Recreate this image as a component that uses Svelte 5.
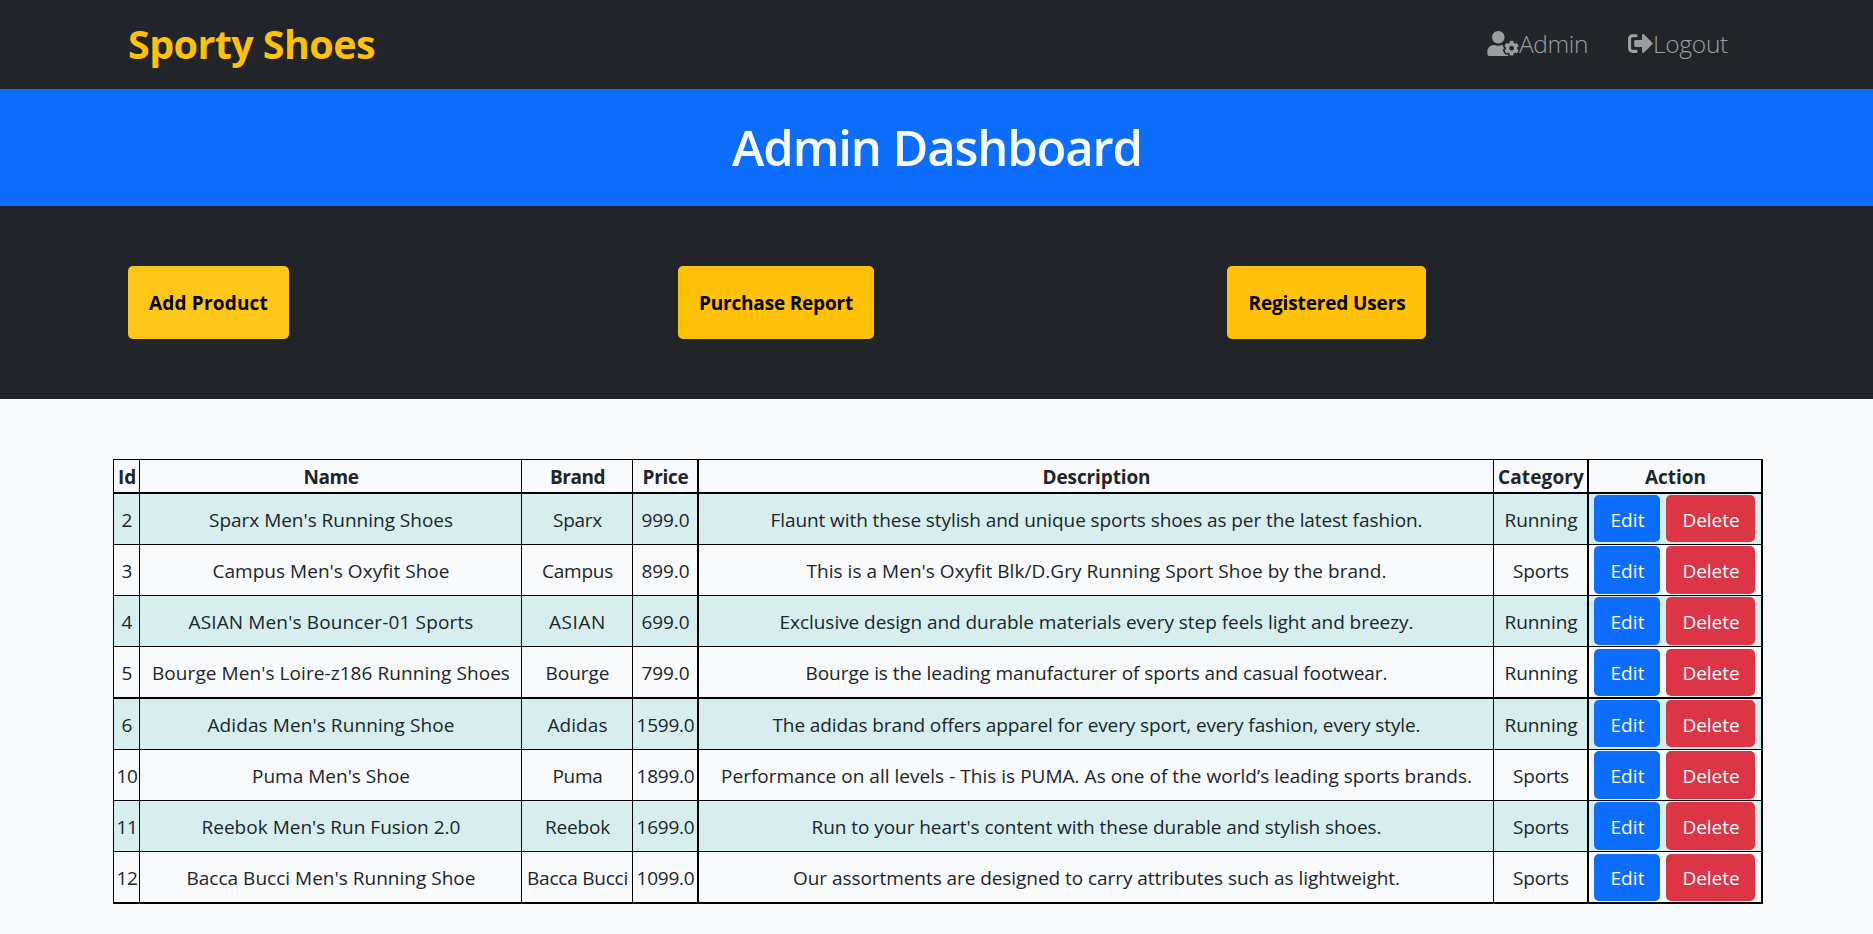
<script>
  const columns = [
    { label: 'Id', w: 18 },
    { label: 'Name', w: 55 },
    { label: 'Brand', w: 55 },
    { label: 'Price', w: 46 },
    { label: 'Description', w: 108 },
    { label: 'Category', w: 86 },
    { label: 'Action', w: 61 }
  ];

  // Each text cell is a pair: the text and the width it is set to.
  const products = [
    [['2', 11], ["Sparx Men's Running Shoes", 244], ['Sparx', 49], ['999.0', 48], ['Flaunt with these stylish and unique sports shoes as per the latest fashion.', 652], ['Running', 73]],
    [['3', 11], ["Campus Men's Oxyfit Shoe", 237], ['Campus', 71], ['899.0', 48], ["This is a Men's Oxyfit Blk/D.Gry Running Sport Shoe by the brand.", 580], ['Sports', 56]],
    [['4', 11], ["ASIAN Men's Bouncer-01 Sports", 285], ['ASIAN', 57], ['699.0', 48], ['Exclusive design and durable materials every step feels light and breezy.', 634], ['Running', 73]],
    [['5', 11], ["Bourge Men's Loire-z186 Running Shoes", 358], ['Bourge', 64], ['799.0', 48], ['Bourge is the leading manufacturer of sports and casual footwear.', 582], ['Running', 73]],
    [['6', 11], ["Adidas Men's Running Shoe", 247], ['Adidas', 60], ['1599.0', 58], ['The adidas brand offers apparel for every sport, every fashion, every style.', 648], ['Running', 73]],
    [['10', 21], ["Puma Men's Shoe", 158], ['Puma', 50], ['1899.0', 58], ['Performance on all levels - This is PUMA. As one of the world’s leading sports brands.', 751], ['Sports', 56]],
    [['11', 21], ["Reebok Men's Run Fusion 2.0", 259], ['Reebok', 65], ['1699.0', 58], ["Run to your heart's content with these durable and stylish shoes.", 570], ['Sports', 56]],
    [['12', 21], ["Bacca Bucci Men's Running Shoe", 289], ['Bacca Bucci', 101], ['1099.0', 58], ['Our assortments are designed to carry attributes such as lightweight.', 607], ['Sports', 56]]
  ];

  // Tracks a label so that it takes up the given width.
  function fit(node, width) {
    const natural = node.getBoundingClientRect().width;
    node.style.letterSpacing = (width - natural) / node.textContent.length + 'px';
  }
</script>

<nav>
  <a class="brand" href="#home"><span use:fit={247}>Sporty Shoes</span></a>
  <div class="links">
    <a href="#admin">
      <svg class="user" viewBox="0 0 640 512"><path d="M610.5 373.3c2.6-14.1 2.6-28.5 0-42.6l25.8-14.9c3-1.7 4.3-5.2 3.3-8.5-6.7-21.6-18.2-41.2-33.2-57.4-2.3-2.5-6-3.1-9-1.4l-25.8 14.9c-10.9-9.3-23.4-16.5-36.9-21.3v-29.8c0-3.4-2.4-6.4-5.7-7.1-22.3-5-45-4.8-66.2 0-3.3.7-5.7 3.7-5.7 7.1v29.8c-13.5 4.8-26 12-36.9 21.3l-25.8-14.9c-2.9-1.7-6.7-1.1-9 1.4-15 16.2-26.5 35.8-33.2 57.4-1 3.3.4 6.8 3.3 8.5l25.8 14.9c-2.6 14.1-2.6 28.5 0 42.6l-25.8 14.9c-3 1.7-4.3 5.2-3.3 8.5 6.7 21.6 18.2 41.1 33.2 57.4 2.3 2.5 6 3.1 9 1.4l25.8-14.9c10.9 9.3 23.4 16.5 36.9 21.3v29.8c0 3.4 2.4 6.4 5.7 7.1 22.3 5 45 4.8 66.2 0 3.3-.7 5.7-3.7 5.7-7.1v-29.8c13.5-4.8 26-12 36.9-21.3l25.8 14.9c2.9 1.7 6.7 1.1 9-1.4 15-16.2 26.5-35.8 33.2-57.4 1-3.3-.4-6.8-3.3-8.5l-25.8-14.9zM496 400.5c-26.8 0-48.5-21.8-48.5-48.5s21.8-48.5 48.5-48.5 48.5 21.8 48.5 48.5-21.7 48.5-48.5 48.5zM224 256c70.7 0 128-57.3 128-128S294.7 0 224 0 96 57.3 96 128s57.3 128 128 128zm201.2 226.5c-2.3-1.2-4.6-2.6-6.8-3.9l-7.9 4.6c-6 3.4-12.8 5.3-19.6 5.3-10.9 0-21.4-4.6-28.9-12.6-18.3-19.8-32.3-43.9-40.2-69.6-5.5-17.7 1.9-36.4 17.9-45.7l7.9-4.6c-.1-2.6-.1-5.2 0-7.8l-7.9-4.6c-16-9.2-23.4-28-17.9-45.7.9-2.9 2.2-5.8 3.2-8.7-3.8-.3-7.5-1.2-11.4-1.2h-16.7c-22.2 10.2-46.9 16-72.9 16s-50.6-5.8-72.9-16h-16.7C60.2 288 0 348.2 0 422.4V464c0 26.5 21.5 48 48 48h352c10.1 0 19.5-3.2 27.2-8.5-1.2-3.8-2-7.7-2-11.8v-9.2z" /></svg><span use:fit={69}>Admin</span>
    </a>
    <a href="#logout">
      <svg class="out" viewBox="0 0 512 512"><path d="M497 273L329 441c-15 15-41 4.5-41-17v-96H152c-13.3 0-24-10.7-24-24v-96c0-13.3 10.7-24 24-24h136V88c0-21.4 25.9-32 41-17l168 168c9.3 9.4 9.3 24.6 0 34zM192 436v-40c0-6.6-5.4-12-12-12H96c-17.7 0-32-14.3-32-32V160c0-17.7 14.3-32 32-32h84c6.6 0 12-5.4 12-12V76c0-6.6-5.4-12-12-12H96c-53 0-96 43-96 96v192c0 53 43 96 96 96h84c6.6 0 12-5.4 12-12z" /></svg><span use:fit={75}>Logout</span>
    </a>
  </div>
</nav>

<header>
  <h1><span use:fit={410}>Admin Dashboard</span></h1>
</header>

<section class="actions">
  <div><button class="add"><span use:fit={119}>Add Product</span></button></div>
  <div><button class="report"><span use:fit={154}>Purchase Report</span></button></div>
  <div><button class="users"><span use:fit={157}>Registered Users</span></button></div>
</section>

<main>
  <table>
    <colgroup>
      <col class="c-id" /><col class="c-name" /><col class="c-brand" /><col class="c-price" />
      <col class="c-desc" /><col class="c-cat" /><col class="c-act" />
    </colgroup>
    <thead>
      <tr>
        {#each columns as col}
          <th><span use:fit={col.w}>{col.label}</span></th>
        {/each}
      </tr>
    </thead>
    <tbody>
      {#each products as row}
        <tr>
          {#each row as [text, w]}
            <td><span use:fit={w}>{text}</span></td>
          {/each}
          <td>
            <div class="buttons">
              <button class="edit"><span use:fit={34}>Edit</span></button>
              <button class="delete"><span use:fit={57}>Delete</span></button>
            </div>
          </td>
        </tr>
      {/each}
    </tbody>
  </table>
</main>

<style>
  :global(body) {
    margin: 0;
    background: #f8fafc;
    color: #212529;
    font-family: 'Open Sans', 'Noto Sans', sans-serif;
    font-size: 19px;
    overflow: hidden;
  }
  span {
    display: inline-block;
    white-space: nowrap;
  }
  button {
    box-sizing: border-box;
    border: 0;
    border-radius: 5px;
    padding: 0;
    font: inherit;
    display: flex;
    align-items: center;
    justify-content: center;
  }
  nav {
    box-sizing: border-box;
    height: 89px;
    padding: 0 145px 0 128px;
    background: #212529;
    display: flex;
    justify-content: space-between;
    align-items: center;
  }
  a {
    text-decoration: none;
  }
  .brand {
    color: #ffc107;
    font-size: 39.5px;
    font-weight: 700;
    line-height: 54px;
    padding-bottom: 2px;
  }
  .links {
    display: flex;
    gap: 40px;
  }
  .links a {
    display: flex;
    align-items: center;
    color: #9b9d9f;
    font-size: 24.5px;
    font-weight: 300;
    line-height: 34px;
    padding-bottom: 2px;
  }
  svg {
    fill: currentColor;
    display: block;
    height: 25px;
  }
  .user {
    width: 32px;
  }
  .out {
    width: 25px;
  }
  header {
    height: 117px;
    background: #0d6efd;
    color: #f8f9fa;
    display: flex;
    align-items: center;
    justify-content: center;
  }
  h1 {
    margin: 0;
    padding: 0 0 1px 1px;
    font-size: 49px;
    font-weight: 600;
    line-height: 68px;
  }
  .actions {
    box-sizing: border-box;
    height: 193px;
    padding: 60px 95px 0 128px;
    background: #212529;
    display: grid;
    grid-template-columns: 550px 549px 551px;
  }
  .actions button {
    height: 73px;
    padding-top: 1px;
    background: #ffc107;
    color: #000;
    font-weight: 700;
  }
  .actions .add {
    width: 161px;
    background: #ffc61a;
  }
  .actions .report {
    width: 196px;
  }
  .actions .users {
    width: 199px;
    padding-left: 1px;
  }
  main {
    padding: 60px 0 0 113px;
  }
  table {
    table-layout: fixed;
    width: 1650px;
    border-collapse: separate;
    border-spacing: 0;
    border: solid #000;
    border-width: 1px 0 0 1px;
    line-height: 26px;
    text-align: center;
  }
  .c-id { width: 26px; }
  .c-name { width: 382px; }
  .c-brand { width: 111px; }
  .c-price { width: 66px; }
  .c-desc { width: 795px; }
  .c-cat { width: 95px; }
  .c-act { width: 174px; }
  th,
  td {
    box-sizing: border-box;
    height: 51px;
    padding: 1px 0 0 1px;
    border: solid #000;
    border-width: 0 1px 1px 0;
    vertical-align: middle;
  }
  td:last-child {
    padding: 1px 0 0 5px;
    vertical-align: top;
  }
  th {
    height: 34px;
    border-bottom-width: 2px;
    font-weight: 700;
  }
  th span,
  td span {
    vertical-align: top;
  }
  th:nth-child(4),
  td:nth-child(4),
  th:nth-child(n + 6),
  td:nth-child(n + 6) {
    border-right-width: 2px;
  }
  tbody tr:nth-child(odd) {
    background: #d6eeee;
  }
  tbody tr:nth-child(4n) td {
    height: 52px;
    border-bottom-width: 2px;
  }
  tbody tr:nth-child(4n) td:last-child {
    padding-top: 2px;
  }
  .buttons {
    display: flex;
    gap: 6px;
  }
  .buttons button {
    height: 48px;
    padding: 2px 0 0 1px;
    color: #fff;
  }
  tr:nth-child(4n) .buttons button,
  tr:nth-child(4n + 1) .buttons button {
    height: 47px;
  }
  tr:nth-child(4n) .buttons button {
    padding-top: 1px;
  }
  .buttons .edit {
    width: 66px;
    background: #0d6efd;
  }
  .buttons .delete {
    width: 89px;
    background: #dc3545;
  }
</style>
